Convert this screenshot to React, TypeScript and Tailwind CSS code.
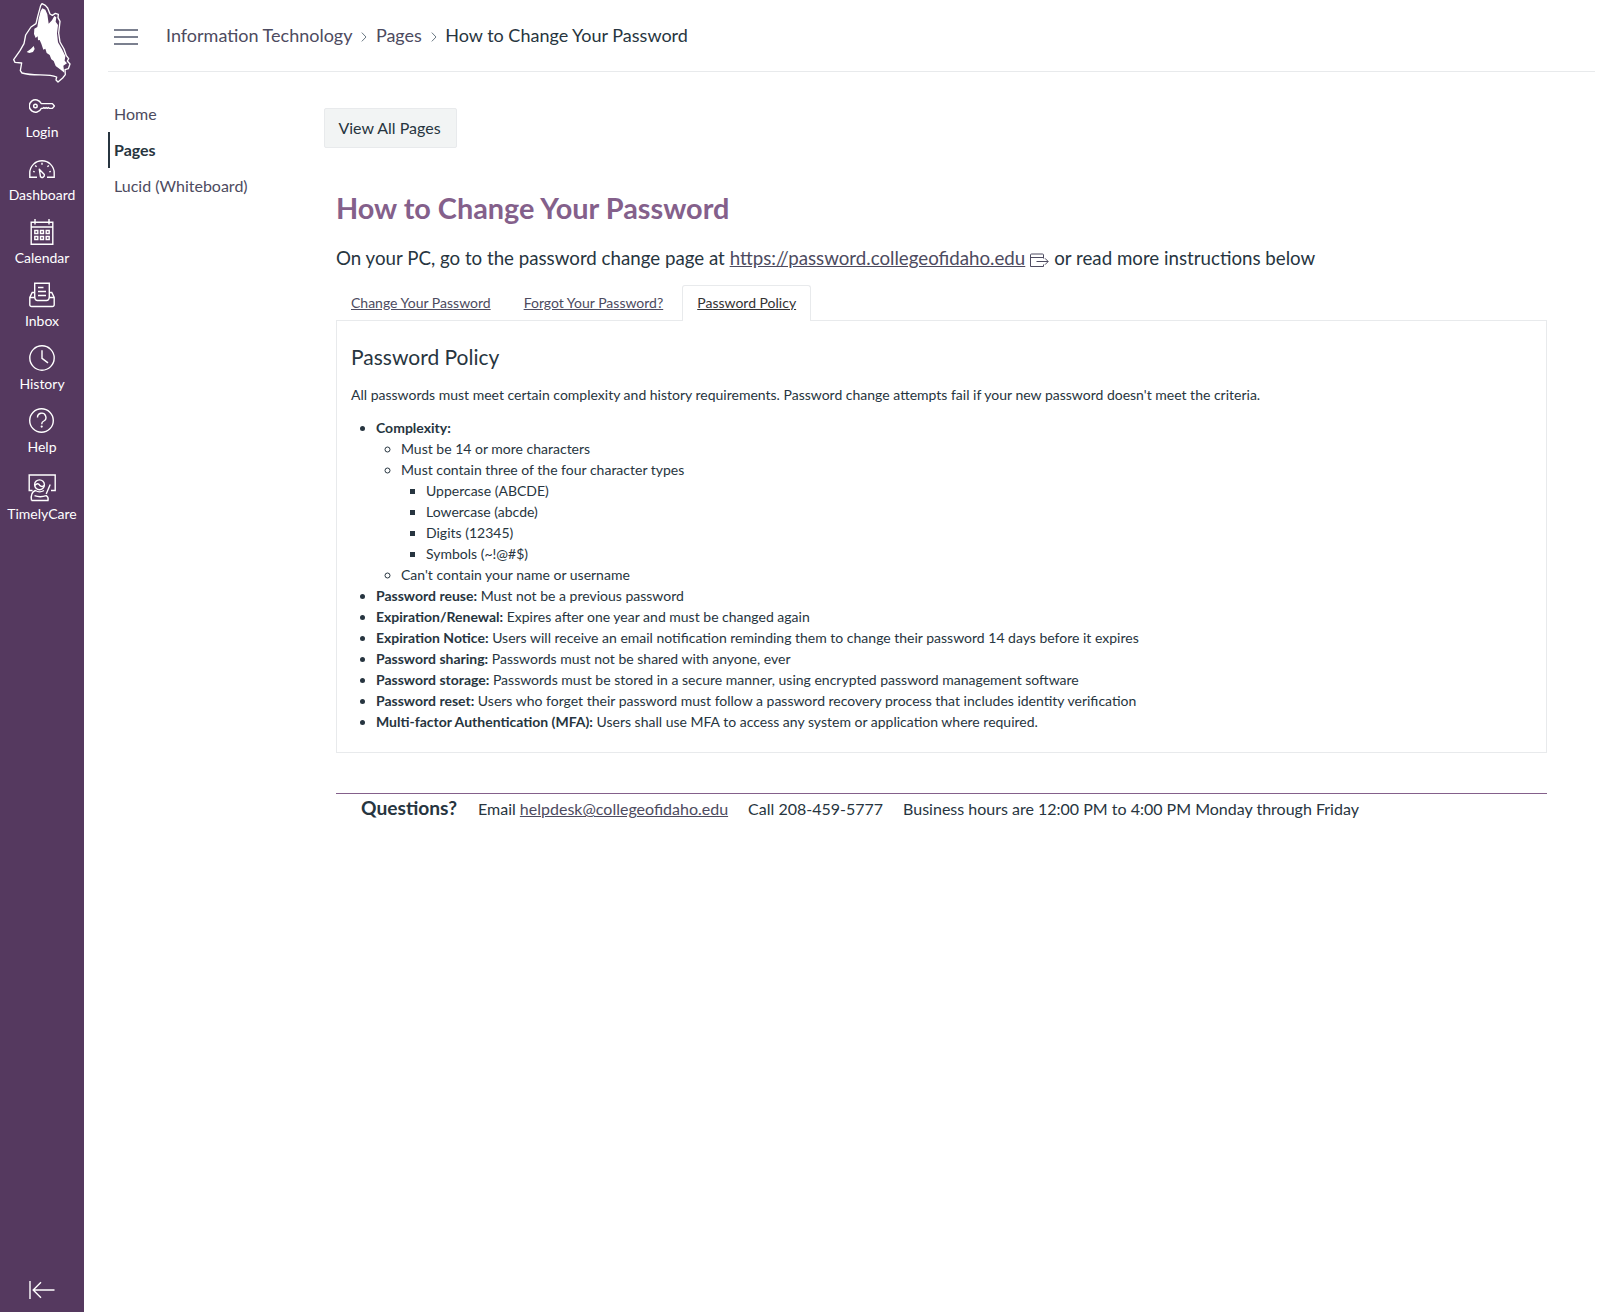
import React from "react";

type NavItem = { label: string; icon: React.ReactNode; box: string };

const stroke = {
  fill: "none",
  stroke: "currentColor",
  strokeWidth: 1.4,
};

const items: NavItem[] = [
  {
    label: "Login",
    box: "h-[63px]",
    icon: (
      <svg width="26" height="26" viewBox="0 0 26 26" {...stroke}>
        <path d="M12.2 10.6a6.2 6.2 0 1 0 0 4.800h1.600l1.100-.9 1.100.9 1.100-.9 1.100.9 1.100-.9 1.100.9h3l2-2.400-2-2.400H12.200z" strokeLinejoin="round" />
        <circle cx="6.4" cy="13" r="1.8" />
      </svg>
    ),
  },
  {
    label: "Dashboard",
    box: "h-[63px]",
    icon: (
      <svg width="26" height="26" viewBox="0 0 26 26" {...stroke}>
        <path d="M8 21.3H.8V17a12.2 12.2 0 0 1 24.4 0v4.3H18" />
        <path d="M10.300 13.300l5 5.200a2.300 2.300 0 0 1-3.800 2.300z" strokeLinejoin="round" />
        <path d="M13 6.800v2M6.200 9.500l1.400 1.300M19.800 9.500l-1.400 1.300M4.200 15.300l1.500.5M21.800 15.300l-1.500.5" />
      </svg>
    ),
  },
  {
    label: "Calendar",
    box: "h-[63px]",
    icon: (
      <svg width="26" height="26" viewBox="0 0 26 26" {...stroke}>
        <path d="M2.200 3.200h21.600v22H2.200zM2.200 8h21.600M6 0v5.500M20 0v5.500" />
        <path d="M5.800 11.500h3v3h-3zM11.500 11.500h3v3h-3zM17.200 11.500h3v3h-3zM5.800 17.500h3v3h-3zM11.500 17.500h3v3h-3zM17.200 17.500h3v3h-3z" />
      </svg>
    ),
  },
  {
    label: "Inbox",
    box: "h-[63px]",
    icon: (
      <svg width="26" height="26" viewBox="0 0 26 26" {...stroke}>
        <path d="M5.700 15.500V1.200h14.600v14.300M9 5.500h5.500M9 9.500h8M9 13.500h8" />
        <path d="M5.700 10.500H3.200L.8 15.500v7.200a1.800 1.800 0 0 0 1.800 1.800h20.800a1.800 1.800 0 0 0 1.800-1.800v-7.200l-2.400-5h-2.500M.8 15.500h4.900c.3 2.300 1 3 2.800 3h9c1.800 0 2.500-.7 2.800-3h4.900" />
      </svg>
    ),
  },
  {
    label: "History",
    box: "h-[63px]",
    icon: (
      <svg width="26" height="26" viewBox="0 0 26 26" {...stroke}>
        <circle cx="13" cy="13" r="12.200" />
        <path d="M13 5.300V13.300l6 4.600" />
      </svg>
    ),
  },
  {
    label: "Help",
    box: "h-[63px]",
    icon: (
      <svg width="26" height="26" viewBox="0 0 26 26" {...stroke}>
        <circle cx="12.500" cy="12.500" r="11.800" />
        <path d="M8.500 9.500a4.200 4.200 0 1 1 6.300 3.500c-1.500.8-2.100 1.300-2.100 3.200" />
        <circle cx="12.700" cy="18.600" r="1.100" fill="currentColor" stroke="none" />
      </svg>
    ),
  },
  {
    label: "TimelyCare",
    box: "h-[67px] pt-[3px]",
    icon: (
      <svg width="28" height="28" viewBox="0 0 28 28" {...stroke}>
        <path d="M4.500 16.500H1.200V1h26v15.500H23" />
        <circle cx="11.500" cy="10.800" r="4.900" />
        <path d="M6.800 11.500c2-2.800 4.300-2 5 0 1.200 1.300 3.200 1.200 4.500 0" />
        <path d="M22.200 10.500l-4 9.500M3.500 26.500c-.8-5 .2-8.700 3.800-10 2.700 1.700 6 1.700 8.700 0M6.500 21.700c4 1.500 8 1.300 11.700 0 2.200 1.200 2.200 3 1.800 4.800H3.500" />
      </svg>
    ),
  },
];

function Logo() {
  return (
    <svg className="h-[84px] w-[84px]" viewBox="0 0 252 252" aria-label="Home">
      <path
        d="M126 11L136 16L143 24L150 42L157 46L166 40L175 43L174 53L180 64L176 99L180 126L192 147L199 167L206 176L202 183L210 192L205 206L195 209L196 224L188 234L174 246L168 240L170 231C142 219 103 230 66 219L61 212L65 189L45 187L41 179L60 152L72 131L77 105L93 81L108 71L114 46L122 17Z"
        fill="none"
        stroke="#fff"
        strokeWidth="4"
        strokeLinejoin="round"
      />
      <path
        d="M127 25L136 29L142 43L146 71L156 61L163 48L169 52L167 65L174 75L171 100L174 127L186 148L196 168L194 182L201 190L190 197L193 218L182 209L167 198L161 183L154 178L149 165L140 159L136 146L130 149L124 131L119 120L114 121L113 109L107 114L102 102L103 86L112 81L116 56L122 33Z"
        fill="#fff"
      />
      <path d="M80 156L93 146L101 138L104 147L99 156L88 159Z" fill="#fff" />
    </svg>
  );
}

function Chevron() {
  return (
    <svg className="mt-[5px] shrink-0" width="6" height="10" viewBox="0 0 6 10" fill="none" stroke="#6a7883" strokeWidth="1">
      <path d="M.8.600L5 5L.8 9.400" />
    </svg>
  );
}

function ExternalIcon() {
  return (
    <svg className="mx-[5px] inline-block align-[-3px]" width="19" height="15" viewBox="0 0 19 15" fill="none" stroke="#4d4b60" strokeWidth="1">
      <path d="M13.500 5.500V2a1 1 0 0 0-1-1H1.500a1 1 0 0 0-1 1v11.500h13V11.500M.5 4.500h13M6.500 8.500H18M15 5.300l3.200 3.200L15 11.700" />
    </svg>
  );
}

const policies: [string, string][] = [
  ["Password reuse:", "Must not be a previous password"],
  ["Expiration/Renewal:", "Expires after one year and must be changed again"],
  ["Expiration Notice:", "Users will receive an email notification reminding them to change their password 14 days before it expires"],
  ["Password sharing:", "Passwords must not be shared with anyone, ever"],
  ["Password storage:", "Passwords must be stored in a secure manner, using encrypted password management software"],
  ["Password reset:", "Users who forget their password must follow a password recovery process that includes identity verification"],
  ["Multi-factor Authentication (MFA):", "Users shall use MFA to access any system or application where required."],
];

export default function App() {
  return (
    <div className="flex h-[1312px] w-full bg-white font-['Lato',sans-serif] text-[#273540]">
      <aside className="flex w-[84px] shrink-0 flex-col items-center bg-[#55395f] text-white">
        <Logo />
        <nav className="mt-[9px] flex w-full flex-col">
          {items.map((item) => (
            <a key={item.label} className={`flex flex-col items-center ${item.box}`}>
              {item.icon}
              <span className={item.label === "TimelyCare" ? "mt-[2px] text-[14px] leading-[20px]" : "mt-[3px] text-[14px] leading-[20px]"}>{item.label}</span>
            </a>
          ))}
        </nav>
        <svg className="mb-[10px] mt-auto" width="26" height="24" viewBox="0 0 26 24" fill="none" stroke="currentColor" strokeWidth="1.400">
          <path d="M1 3v18M25.500 12H4.500M12 4.200L4.200 12l7.800 7.800" />
        </svg>
      </aside>

      <div className="flex min-w-0 flex-1 flex-col px-6">
        <header className="flex h-[72px] items-center border-b border-[#e8eaec] pl-[6px]">
          <button className="mt-[3px] flex h-4 w-6 flex-col justify-between" aria-label="Menu">
            <span className="h-[2px] w-full bg-[#7b808f]" />
            <span className="h-[2px] w-full bg-[#7b808f]" />
            <span className="h-[2px] w-full bg-[#7b808f]" />
          </button>
          <div className="-mt-[2px] ml-7 flex items-center gap-[8.700px] text-[18px] leading-6 text-[#4d4b60]">
            <span>Information Technology</span>
            <Chevron />
            <span>Pages</span>
            <Chevron />
            <span className="text-[#273540]">How to Change Your Password</span>
          </div>
        </header>

        <div className="flex">
          <nav className="flex w-[192px] shrink-0 flex-col pt-6 text-[16px] leading-[36px] text-[#4d4b60]">
            <a className="pl-[6px]">Home</a>
            <a className="border-l-2 border-[#273540] pl-1 font-bold text-[#273540]">Pages</a>
            <a className="pl-[6px]">Lucid (Whiteboard)</a>
          </nav>

          <main className="ml-6 min-w-0 flex-1 pr-12 pt-9">
            <button className="h-10 w-[133px] rounded-[2px] border border-[#e8eaec] bg-[#f2f4f4] pr-[2px] text-[16px]">View All Pages</button>
            <div className="ml-3 pt-[39px]">
              <h1 className="text-[28.850px] font-bold leading-[43px] text-[#84608b]">How to Change Your Password</h1>
              <p className="mt-[14px] text-[18.720px] leading-[28px]">
                On your PC, go to the password change page at{" "}
                <a className="text-[#4d4b60] underline">https://password.collegeofidaho.edu</a>
                <ExternalIcon />
                or read more instructions below
              </p>
              <div className="mt-[13px] flex text-[14px] leading-[21px] text-[#4d4b60]">
                <a className="mr-1 px-[15px] py-[7px] underline">Change Your Password</a>
                <a className="mr-[5px] px-[14px] py-[7px] underline">Forgot Your Password?</a>
                <a className="relative -mb-px h-[36px] rounded-t-[3px] border border-b-0 border-[#e8eaec] bg-white px-[14px] py-[6px] text-[#333] underline">
                  Password Policy
                </a>
              </div>
              <section className="h-[433px] border border-[#e8eaec] px-[14px] pt-[19px] text-[14px] leading-[21px]">
                <h2 className="text-[21px] leading-[34px]">Password Policy</h2>
                <p className="mt-[10px]">
                  All passwords must meet certain complexity and history requirements. Password change attempts fail if your new password doesn't meet the criteria.
                </p>
                <ul className="mt-3 list-disc pl-[25px]">
                  <li>
                    <strong>Complexity:</strong>
                    <ul className="list-[circle] pl-[25px]">
                      <li>Must be 14 or more characters</li>
                      <li>
                        Must contain three of the four character types
                        <ul className="list-[square] pl-[25px]">
                          <li>Uppercase (ABCDE)</li>
                          <li>Lowercase (abcde)</li>
                          <li>Digits (12345)</li>
                          <li>Symbols (~!@#$)</li>
                        </ul>
                      </li>
                      <li>Can't contain your name or username</li>
                    </ul>
                  </li>
                  {policies.map(([name, text]) => (
                    <li key={name}>
                      <strong>{name}</strong> {text}
                    </li>
                  ))}
                </ul>
              </section>
              <footer className="mt-10 flex items-baseline border-t border-[#84608b] pl-[25px] text-[16px] leading-[28px]">
                <strong className="text-[19.200px]">Questions?</strong>
                <span className="ml-[21px]">
                  Email <a className="text-[#4d4b60] underline">helpdesk@collegeofidaho.edu</a>
                </span>
                <span className="ml-5">Call 208-459-5777</span>
                <span className="ml-5">Business hours are 12:00 PM to 4:00 PM Monday through Friday</span>
              </footer>
            </div>
          </main>
        </div>
      </div>
    </div>
  );
}
